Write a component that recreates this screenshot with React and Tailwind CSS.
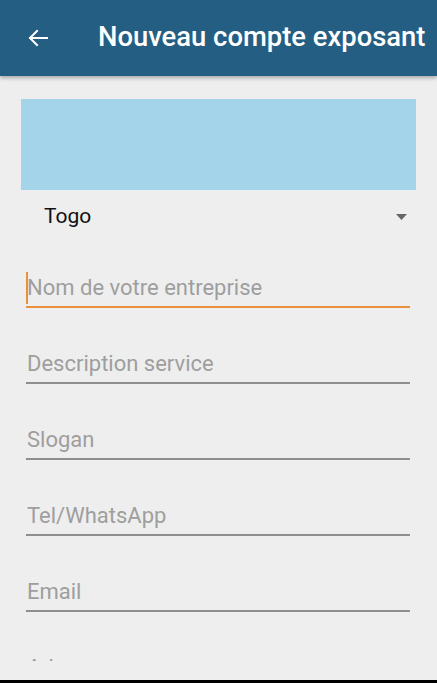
import React from "react";

const fields = [
  "Nom de votre entreprise",
  "Description service",
  "Slogan",
  "Tel/WhatsApp",
  "Email",
  "Adresse",
];

const Field = ({ label, focused }) => {
  return (
    <div className="flex flex-col">
      <div className="relative h-[24px] leading-[24px] text-[22px] text-[#9e9e9e] pl-[1px]">
        {focused && (
          <span className="absolute left-0 top-[-4px] w-[2px] h-[32px] bg-[#e8913c]" />
        )}
        {label}
      </div>
      <div
        className={
          focused
            ? "mt-[6px] h-[2px] bg-[#e8913c]"
            : "mt-[6px] h-[2px] bg-[#8e8e8e]"
        }
      />
    </div>
  );
};

export default function App() {
  return (
    <main
      className="w-[437px] h-[683px] bg-[#eeeeee] flex flex-col overflow-hidden"
      style={{ fontFamily: "Roboto, 'Noto Sans', sans-serif" }}
    >
      <header className="relative z-10 h-[76px] shrink-0 bg-[#245e82] flex items-center shadow-[0_2px_4px_rgba(0,0,0,0.3)]">
        <svg
          className="ml-[26px]"
          width="24"
          height="24"
          viewBox="0 0 24 24"
          fill="none"
          stroke="white"
          strokeWidth="2"
          strokeLinecap="square"
        >
          <path d="M21 12H4" />
          <path d="M11 5l-7 7 7 7" />
        </svg>
        <h1 className="ml-[48px] text-white text-[27.4px] font-medium whitespace-nowrap">
          Nouveau compte exposant
        </h1>
      </header>

      <div className="h-[585px] shrink-0 overflow-hidden">
        <div className="mt-[23px] mx-[21px] h-[91px] bg-[#a3d4ea]" />

        <div className="h-[54px] flex items-center justify-between pl-[44px] pr-[30px]">
          <span className="text-[21px] text-[#111111]">Togo</span>
          <svg width="11" height="6" viewBox="0 0 11 6">
            <path d="M0 0h11L5.5 6z" fill="#666666" />
          </svg>
        </div>

        <div className="mt-[32px] ml-[26px] mr-[27px] flex flex-col gap-[44px]">
          {fields.map((f, i) => (
            <Field key={f} label={f} focused={i === 0} />
          ))}
        </div>
      </div>

      <div className="flex-1" />
      <div className="h-[3px] shrink-0 bg-black" />
    </main>
  );
}
